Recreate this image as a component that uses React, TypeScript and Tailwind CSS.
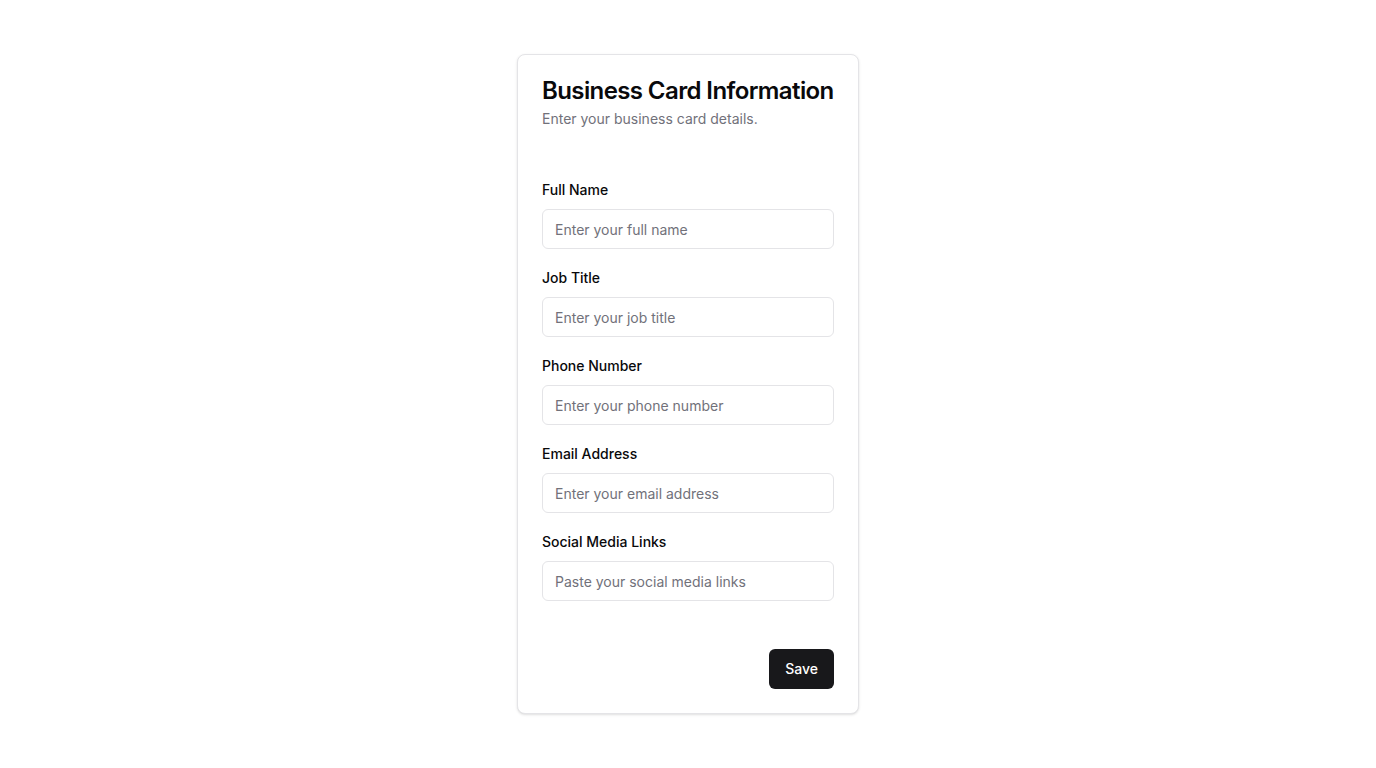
import React from "react";

const fields = [
  { label: "Full Name", placeholder: "Enter your full name" },
  { label: "Job Title", placeholder: "Enter your job title" },
  { label: "Phone Number", placeholder: "Enter your phone number" },
  { label: "Email Address", placeholder: "Enter your email address" },
  { label: "Social Media Links", placeholder: "Paste your social media links" },
];

export default function App() {
  return (
    <div
      className="min-h-screen bg-white flex justify-center pt-[54px] text-[#09090b]"
      style={{ fontFamily: "Inter, 'Noto Sans', sans-serif" }}
    >
      <div className="w-[342px] h-[660px] rounded-lg border border-[#e4e4e7] bg-white shadow-sm flex flex-col">
        <div className="px-6 pt-6">
          <h1 className="text-2xl font-semibold leading-none tracking-tight">Business Card Information</h1>
          <p className="mt-1.5 text-sm leading-5 text-[#71717a]">Enter your business card details.</p>
        </div>
        <div className="px-6 pt-[51px] flex flex-col gap-[19px]">
          {fields.map((f) => (
            <div key={f.label} className="flex flex-col gap-[9px]">
              <label className="text-sm leading-5 font-medium">{f.label}</label>
              <input
                className="h-10 w-full rounded-md border border-[#e4e4e7] bg-white px-3 text-sm placeholder:text-[#71717a] outline-none"
                placeholder={f.placeholder}
              />
            </div>
          ))}
        </div>
        <div className="px-6 pt-12 flex justify-end">
          <button className="h-10 px-4 rounded-md bg-[#18181b] text-white text-sm font-medium">Save</button>
        </div>
      </div>
    </div>
  );
}
